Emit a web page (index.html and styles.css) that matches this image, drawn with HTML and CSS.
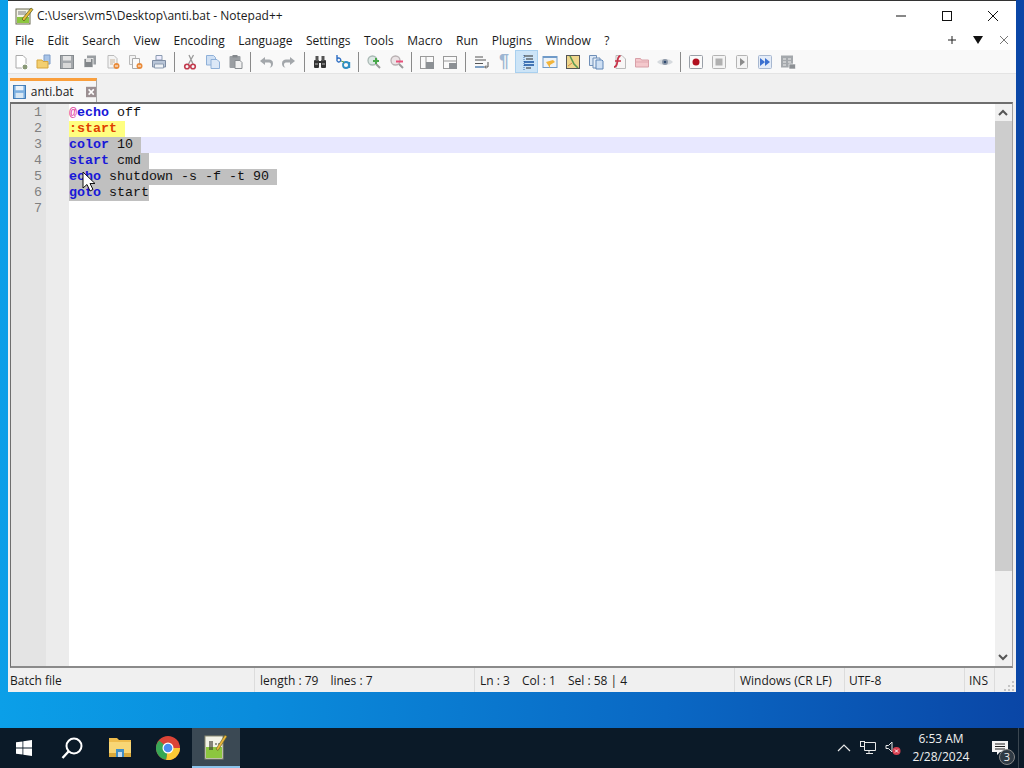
FILE: index.html
```html
<!DOCTYPE html>
<html lang="en">
<head>
    <meta charset="UTF-8">
    <title>anti.bat - Notepad++</title>
    <link rel="stylesheet" href="styles.css">
</head>
<body>
    <div class="desktop">
        <div class="window">
            <div class="titlebar">
                <svg class="app-icon" width="20" height="20" viewBox="0 0 20 20"><rect x="2" y="3" width="14" height="15" fill="#f4f4e8" stroke="#6a6a50"/><rect x="3" y="11" width="12" height="6" fill="#8cc63f"/><path d="M4 6h8M4 8h8" stroke="#7a7a7a"/><path d="M8 13L17 2l2 1.500L10 15z" fill="#e9b93c" stroke="#4d5a1e" stroke-width=".7"/></svg>
                <span class="title">C:\Users\vm5\Desktop\anti.bat - Notepad++</span>
                <div class="win-buttons">
                    <svg width="46" height="30" viewBox="0 0 46 30"><path d="M18 15h10" stroke="#111"/></svg>
                    <svg width="46" height="30" viewBox="0 0 46 30"><rect x="18.500" y="10.500" width="9" height="9" fill="none" stroke="#111"/></svg>
                    <svg width="46" height="30" viewBox="0 0 46 30"><path d="M18 10l10 10M28 10L18 20" stroke="#111"/></svg>
                </div>
            </div>

            <div class="menubar">
                <span>File</span><span>Edit</span><span>Search</span><span>View</span><span>Encoding</span><span>Language</span><span>Settings</span><span>Tools</span><span>Macro</span><span>Run</span><span>Plugins</span><span>Window</span><span>?</span>
                <div class="menu-right">
                    <svg width="10" height="10" viewBox="0 0 10 10"><path d="M5 1v8M1 5h8" stroke="#222"/></svg>
                    <svg width="10" height="8" viewBox="0 0 10 8"><path d="M0 0h10L5 8z" fill="#111"/></svg>
                    <svg width="10" height="10" viewBox="0 0 10 10"><path d="M1 1l8 8M9 1L1 9" stroke="#777"/></svg>
                </div>
            </div>

            <div class="toolbar">
                <div class="tool"><svg viewBox="0 0 16 16"><path d="M3 1.500h7l3 3V14H3z" fill="#fff" stroke="#aaa"/><circle cx="12" cy="13" r="3" fill="#8a9a78" stroke="#fff"/></svg></div>
                <div class="tool"><svg viewBox="0 0 16 16"><path d="M8 1h6v9H8z" fill="#a8c4e8" stroke="#7d9cc8"/><path d="M1 6h5l1 1.500h5V14H1z" fill="#f3cf70" stroke="#d5a53c"/></svg></div>
                <div class="tool"><svg viewBox="0 0 16 16"><rect x="1.500" y="1.500" width="13" height="13" fill="#a4a8ac" stroke="#858a8e"/><rect x="4" y="2" width="8" height="4.500" fill="#e4e4e4"/><rect x="4" y="9" width="8" height="5" fill="#d8d8d8"/></svg></div>
                <div class="tool"><svg viewBox="0 0 16 16"><rect x="5" y="1.500" width="9" height="9" fill="#9a9ea2"/><rect x="2" y="4.500" width="9" height="9" fill="#83878b" stroke="#fff" stroke-width=".7"/><rect x="4" y="5" width="5" height="3" fill="#ddd"/></svg></div>
                <div class="tool"><svg viewBox="0 0 16 16"><path d="M3 1.500h6l3 3V14H3z" fill="#f4f4f4" stroke="#bbb"/><path d="M5 6h5M5 8h5M5 10h3" stroke="#c9b59c"/><circle cx="11.500" cy="12" r="3" fill="#e98b3a"/><path d="M10 12h3" stroke="#fff"/></svg></div>
                <div class="tool"><svg viewBox="0 0 16 16"><path d="M1.500 1.500h6v9h-6z" fill="#f4f4f4" stroke="#bbb"/><path d="M4.500 4.500h7v10h-7z" fill="#fafafa" stroke="#aaa"/><circle cx="11.500" cy="12" r="3" fill="#e98b3a"/><path d="M10 12h3" stroke="#fff"/></svg></div>
                <div class="tool"><svg viewBox="0 0 16 16"><path d="M5 1.500h6V6H5z" fill="#eef" stroke="#8b9bb0"/><path d="M1.500 6.500h13V13h-13z" fill="#b9c6d8" stroke="#7e8da3"/><path d="M3.500 10h9v4h-9z" fill="#eef2f6" stroke="#8b9bb0"/></svg></div>
                <div class="tool-sep"></div>
                <div class="tool"><svg viewBox="0 0 16 16"><path d="M11.500 1L6.500 10M7 1l4 9" stroke="#9a9a9a" stroke-width="1.300"/><circle cx="5" cy="12.500" r="2.300" fill="none" stroke="#c23b4e" stroke-width="1.600"/><circle cx="11" cy="12.500" r="2.300" fill="none" stroke="#c23b4e" stroke-width="1.600"/></svg></div>
                <div class="tool"><svg viewBox="0 0 16 16"><path d="M1.500 1.500h7l2 2V11h-9z" fill="#cfe0f4" stroke="#8fb0d8"/><path d="M6 5.500h6l2.500 2.500v6.500H6z" fill="#dce8f7" stroke="#8fb0d8"/></svg></div>
                <div class="tool"><svg viewBox="0 0 16 16"><rect x="1.500" y="2" width="11" height="12" rx="1" fill="#9a9ea2"/><rect x="4.500" y="1" width="5" height="2.500" fill="#83878b"/><path d="M7 6.500h5l2 2v6H7z" fill="#f0f0f0" stroke="#8a8e92"/></svg></div>
                <div class="tool-sep"></div>
                <div class="tool"><svg viewBox="0 0 16 16"><path d="M7 3L2 7l5 4V8.500h4c1.500 0 2 1 2 2.500 0 1-.5 2-1.500 2.500 2.500 0 3.500-2 3.500-4 0-3-2-4-4-4H7z" fill="#a3a7ab"/></svg></div>
                <div class="tool"><svg viewBox="0 0 16 16"><path d="M9 3l5 4-5 4V8.500H5c-1.500 0-2 1-2 2.500 0 1 .5 2 1.500 2.500C2 13.500 1 11.500 1 9.500c0-3 2-4 4-4h4z" fill="#a3a7ab"/></svg></div>
                <div class="tool-sep"></div>
                <div class="tool"><svg viewBox="0 0 16 16"><rect x="2" y="6" width="5" height="8" rx="1" fill="#333"/><rect x="9" y="6" width="5" height="8" rx="1" fill="#333"/><rect x="3.500" y="2" width="3" height="5" fill="#555"/><rect x="9.500" y="2" width="3" height="5" fill="#555"/><path d="M7 8h2" stroke="#333" stroke-width="2"/><path d="M3 10h3M10 10h3" stroke="#bbb"/></svg></div>
                <div class="tool"><svg viewBox="0 0 16 16"><path d="M2 1v6M2 5a2 2 0 1 1 0 2" fill="none" stroke="#2f6fc4" stroke-width="1.400"/><circle cx="11" cy="11" r="3" fill="none" stroke="#2f8fc4" stroke-width="1.800"/><path d="M14.500 8v6" stroke="#2f8fc4" stroke-width="1.400"/><path d="M6 7l3 1-1 1" fill="none" stroke="#5a9a5a"/></svg></div>
                <div class="tool-sep"></div>
                <div class="tool"><svg viewBox="0 0 16 16"><circle cx="6.500" cy="6.500" r="4.500" fill="#dce8e4" stroke="#a9b8b4" stroke-width="1.300"/><path d="M10 10l4 4" stroke="#9a9a9a" stroke-width="2"/><path d="M7 7h6M10 4v6" stroke="#48a84a" stroke-width="2"/></svg></div>
                <div class="tool"><svg viewBox="0 0 16 16"><circle cx="6.500" cy="6.500" r="4.500" fill="#ebe4e6" stroke="#b8b0b2" stroke-width="1.300"/><path d="M10 10l4 4" stroke="#9a9a9a" stroke-width="2"/><path d="M7 7.500h7" stroke="#e8507a" stroke-width="2"/></svg></div>
                <div class="tool-sep"></div>
                <div class="tool"><svg viewBox="0 0 16 16"><rect x="1.500" y="2.500" width="13" height="12" fill="#fafafa" stroke="#9a9a9a"/><path d="M7 3v11" stroke="#9a9a9a"/><rect x="7" y="8" width="8" height="7" fill="#8c9094"/></svg></div>
                <div class="tool"><svg viewBox="0 0 16 16"><rect x="1.500" y="2.500" width="13" height="12" fill="#fafafa" stroke="#9a9a9a"/><path d="M2 7h12" stroke="#9a9a9a"/><rect x="7" y="9" width="8" height="6" fill="#8c9094"/></svg></div>
                <div class="tool-sep"></div>
                <div class="tool"><svg viewBox="0 0 16 16"><path d="M2 3h8M2 6h11M2 9.500h8" stroke="#555" stroke-width="1.200"/><path d="M2 13h9" stroke="#7fa0c4" stroke-width="2"/><path d="M15 8v5h-3M13 11.500L11.500 13l1.500 1.500" fill="none" stroke="#555"/></svg></div>
                <div class="tool glyph">¶</div>
                <div class="tool active"><svg viewBox="0 0 16 16"><path d="M5 1v15" stroke="#3a6fb0" stroke-dasharray="1 1"/><path d="M5 2h9M7 5h7" stroke="#2a2a2a" stroke-width="1.200"/><path d="M5 8h10M5 11h10" stroke="#1550a0" stroke-width="1.500"/><path d="M7 14h5" stroke="#2a2a2a"/></svg></div>
                <div class="tool"><svg viewBox="0 0 16 16"><rect x="1" y="2.500" width="14" height="11" fill="#eef3f8" stroke="#6f9ac8"/><rect x="1" y="2" width="14" height="2" fill="#6f9ac8"/><path d="M4 8l7-2 2 2-5 3v3l-2-3z" fill="#f2b53c"/></svg></div>
                <div class="tool"><svg viewBox="0 0 16 16"><rect x="1.500" y="1.500" width="13" height="13" fill="#efd68c" stroke="#555"/><path d="M5 2l4 8 4 4" fill="none" stroke="#5c9a50" stroke-width="1.600"/><path d="M3 12l4-3" stroke="#d88a4a"/></svg></div>
                <div class="tool"><svg viewBox="0 0 16 16"><path d="M1.500 1.500h7v10h-7z" fill="#dce8f6" stroke="#6f8fb8"/><path d="M5 4h7v10H5z" fill="#e6eef8" stroke="#6f8fb8"/><path d="M8 6h6l1 1v8H8z" fill="#cfe0f4" stroke="#5f86b8"/></svg></div>
                <div class="tool"><svg viewBox="0 0 16 16"><path d="M5 1.500h6l3.500 3.500v9.500H5z" fill="#f8f6f6" stroke="#bbb"/><path d="M9.500 2C7 2 7 4 6.500 7c-.5 3-.5 6-3.500 6" fill="none" stroke="#c8344a" stroke-width="1.800"/><path d="M4 7h6" stroke="#c8344a" stroke-width="1.500"/></svg></div>
                <div class="tool"><svg viewBox="0 0 16 16"><path d="M1.500 4.500h5l1 1.500h7v7h-13z" fill="#f4c8cc" stroke="#d8a0a8"/><path d="M2 8h12" stroke="#e0a8b0"/></svg></div>
                <div class="tool"><svg viewBox="0 0 16 16"><path d="M0 8c3-4 13-4 16 0-3 4-13 4-16 0z" fill="#d6dade"/><circle cx="8" cy="8" r="3" fill="#8c98a8"/><circle cx="8" cy="8" r="1.300" fill="#2f4a70"/></svg></div>
                <div class="tool-sep"></div>
                <div class="tool"><svg viewBox="0 0 16 16"><rect x="1.500" y="1.500" width="13" height="13" rx="1" fill="#fafafa" stroke="#9aa0a8"/><circle cx="8" cy="8" r="3.500" fill="#b01020"/></svg></div>
                <div class="tool"><svg viewBox="0 0 16 16"><rect x="1.500" y="1.500" width="13" height="13" rx="1" fill="#f4f4f4" stroke="#b4b4b4"/><rect x="4.500" y="4.500" width="7" height="7" fill="#b0b0b0"/></svg></div>
                <div class="tool"><svg viewBox="0 0 16 16"><rect x="2.500" y="1.500" width="11" height="13" rx="1" fill="#f4f4f4" stroke="#b4b4b4"/><path d="M6 4l5 4-5 4z" fill="#8c8c8c"/></svg></div>
                <div class="tool"><svg viewBox="0 0 16 16"><rect x="1.500" y="1.500" width="13" height="13" rx="1" fill="#e4ecf8" stroke="#a8b8d0"/><path d="M3 4l5 4-5 4zM8 4l5 4-5 4z" fill="#3a70d0"/></svg></div>
                <div class="tool"><svg viewBox="0 0 16 16"><rect x="1" y="1.500" width="12" height="12" fill="#a4a8ac"/><path d="M3 5h3M8 5h3M3 8h3M8 8h3M3 11h3" stroke="#eee"/><rect x="9" y="10" width="6.500" height="5" fill="#8c9094" stroke="#fff" stroke-width=".6"/></svg></div>
            </div>

            <div class="tabbar">
                <div class="tab">
                    <svg width="16" height="16" viewBox="0 0 16 16"><rect x=".5" y=".5" width="14" height="15" fill="#7db0e0" stroke="#2f6fb0"/><rect x="3" y="1" width="9" height="5" fill="#eaf2fa"/><rect x="3" y="9" width="9" height="6" fill="#d8e8f4"/></svg>
                    <span>anti.bat</span>
                    <svg class="tab-close" width="12" height="12" viewBox="0 0 12 12"><rect width="12" height="12" fill="#9b8f92"/><path d="M3 3l6 6M9 3L3 9" stroke="#fff" stroke-width="1.800"/></svg>
                </div>
            </div>

            <div class="editor">
                <div class="gutter">
                    <div>1</div><div>2</div><div>3</div><div>4</div><div>5</div><div>6</div><div>7</div>
                </div>
                <div class="code">
                    <div class="line"><span class="at">@</span><b>echo</b> off</div>
                    <div class="line"><span class="label">:start</span></div>
                    <div class="line current"><span class="sel"><b>color</b> 10</span></div>
                    <div class="line"><span class="sel"><b>start</b> cmd</span></div>
                    <div class="line"><span class="sel"><b>echo</b> shutdown -s -f -t 90</span></div>
                    <div class="line"><span class="sel last"><b>goto</b> start</span></div>
                    <div class="line"></div>
                </div>
                <div class="scrollbar">
                    <svg width="16" height="17" viewBox="0 0 16 17"><path d="M4 11l4-4 4 4" fill="none" stroke="#555" stroke-width="2"/></svg>
                    <div class="track"><div class="thumb"></div></div>
                    <svg width="16" height="17" viewBox="0 0 16 17"><path d="M4 6l4 4 4-4" fill="none" stroke="#555" stroke-width="2"/></svg>
                </div>
            </div>

            <div class="statusbar">
                <div class="st st-type">Batch file</div>
                <div class="st st-len"><span>length : 79</span><span>lines : 7</span></div>
                <div class="st st-pos"><span>Ln : 3</span><span>Col : 1</span><span>Sel : 58 | 4</span></div>
                <div class="st st-eol">Windows (CR LF)</div>
                <div class="st st-enc">UTF-8</div>
                <div class="st st-ins">INS</div>
                <svg class="grip" width="12" height="12" viewBox="0 0 12 12"><path d="M9 2h2v2H9zM5 6h2v2H5zM9 6h2v2H9zM1 10h2v2H1zM5 10h2v2H5zM9 10h2v2H9z" fill="#c4c4c4"/></svg>
            </div>
        </div>

        <svg class="pointer" width="14" height="22" viewBox="0 0 14 22"><path d="M1 1v16l4-3.500L8 20l3-1.500-3-6h5z" fill="#fff" stroke="#111"/></svg>
    </div>

    <div class="taskbar">
        <div class="task"><svg width="16" height="16" viewBox="0 0 16 16"><path d="M0 2.300l6.500-.9v6.200H0zM7.300 1.300L16 0v7.600H7.300zM0 8.400h6.500v6.200L0 13.700zM7.300 8.400H16V16l-8.700-1.300z" fill="#fff"/></svg></div>
        <div class="task"><svg width="24" height="24" viewBox="0 0 24 24"><circle cx="14" cy="10" r="7.500" fill="none" stroke="#fff" stroke-width="2"/><path d="M8.500 15.500L2.500 22" stroke="#fff" stroke-width="2.400"/></svg></div>
        <div class="task"><svg width="24" height="22" viewBox="0 0 24 22"><path d="M1 1h8l2 2h12v17H1z" fill="#eebc4c"/><rect x="1" y="5" width="22" height="15" fill="#f8d675"/><rect x="1" y="16" width="22" height="4" fill="#d9a93b"/><rect x="8" y="12" width="8" height="8" fill="#3f8fc8"/><rect x="10" y="15" width="4" height="5" fill="#c9dcea"/></svg></div>
        <div class="task"><svg width="24" height="24" viewBox="0 0 24 24"><circle cx="12" cy="12" r="12" fill="#db4437"/><path d="M12 12L1.600 18A12 12 0 0 1 3 4.500z" fill="#3aa757"/><path d="M12 12h12A12 12 0 0 1 10 23.900z" fill="#fcc934"/><path d="M1.600 18L6.800 9l5.200 3-1.900 11.800A12 12 0 0 1 1.600 18z" fill="#34a853"/><circle cx="12" cy="12" r="5.500" fill="#fff"/><circle cx="12" cy="12" r="4.300" fill="#4a8cf0"/></svg></div>
        <div class="task open"><svg width="24" height="26" viewBox="0 0 24 26"><rect x="1" y="2" width="18" height="23" fill="#f2f2e6" stroke="#8a8a70"/><rect x="2" y="13" width="16" height="11" fill="#8cc63f"/><path d="M6 7v9M8 7v9M11 10h2M14 10h2" stroke="#3a3a30" stroke-width="1.200"/><path d="M12 15L21 1l2 1.500-9 14z" fill="#eab53c" stroke="#5a5a20" stroke-width=".6"/></svg></div>
        <div class="tray">
            <svg width="14" height="8" viewBox="0 0 14 8"><path d="M1 7l6-6 6 6" fill="none" stroke="#e8e8e8" stroke-width="1.200"/></svg>
            <svg width="16" height="14" viewBox="0 0 16 14"><path d="M4.500 1.500h11v8h-11zM9 9.500v3M6 12.500h7" fill="none" stroke="#e8e8e8"/><rect x=".5" y=".5" width="4" height="5" fill="#0b1a28" stroke="#e8e8e8"/></svg>
            <svg width="16" height="16" viewBox="0 0 16 16"><path d="M1 5.500h2.500L7 2v10L3.500 8.500H1z" fill="none" stroke="#e8e8e8"/><circle cx="11.500" cy="11" r="4" fill="#d84050"/><path d="M10 9.500l3 3M13 9.500l-3 3" stroke="#fff"/></svg>
            <div class="clock"><div>6:53 AM</div><div>2/28/2024</div></div>
            <div class="notify">
                <svg width="16" height="15" viewBox="0 0 16 15"><path d="M0 0h16v11H8l-3 3v-3H0z" fill="#f4f4f4"/><path d="M3 3h10M3 5.500h10M3 8h10" stroke="#222"/></svg>
                <span class="badge">3</span>
            </div>
        </div>
    </div>
</body>
</html>
```

FILE: styles.css
```css
* {
    margin: 0;
    padding: 0;
    box-sizing: border-box;
}

html, body {
    width: 1024px;
    height: 768px;
    overflow: hidden;
}

body {
    font-family: "Open Sans", "Noto Sans", sans-serif;
    font-size: 12px;
    color: #1a1a1a;
    display: flex;
    flex-direction: column;
}

.desktop {
    position: relative;
    height: 728px;
    padding-left: 8px;
    background: linear-gradient(90deg, #0b9fe8 0%, #0a8cdc 25%, #0a68c4 65%, #0a46a6 100%);
}

.window {
    width: 1008px;
    height: 692px;
    background: #f0f0f0;
    border-top: 1px solid #333;
    display: flex;
    flex-direction: column;
}

/* title + menu */
.titlebar {
    height: 29px;
    background: #fff;
    display: flex;
    align-items: center;
    padding-left: 6px;
}

.app-icon {
    margin-right: 3px;
}

.win-buttons {
    margin-left: auto;
    display: flex;
    padding-right: 0;
}

.menubar {
    height: 20px;
    background: #fff;
    display: flex;
    align-items: center;
    gap: 13.500px;
    padding-left: 7px;
}

.menu-right {
    margin-left: auto;
    display: flex;
    align-items: center;
    gap: 16px;
    padding-right: 7px;
}

/* toolbar */
.toolbar {
    height: 24px;
    background: #f9f9f9;
    border-bottom: 1px solid #e4e4e4;
    display: flex;
    align-items: center;
    padding-left: 1.500px;
}

.tool {
    width: 23px;
    height: 23px;
    display: flex;
    align-items: center;
    justify-content: center;
    flex-shrink: 0;
}

.tool svg {
    width: 16px;
    height: 16px;
}

.tool.active {
    background: #cce4f7;
    border: 1px solid #a9d0ef;
}

.tool.glyph {
    font-family: "Liberation Sans", sans-serif;
    font-size: 18px;
    font-weight: bold;
    color: #9db6d2;
}

.tool-sep {
    width: 7.670px;
    height: 20px;
    flex-shrink: 0;
    background: linear-gradient(#8a8a8a, #8a8a8a) no-repeat center / 1px 100%;
}

/* tabs */
.tabbar {
    height: 28px;
    background: #f0f0f0;
    padding: 4px 0 0 2px;
}

.tab {
    width: 87px;
    height: 24px;
    border-top: 3px solid #fa9f3c;
    border-right: 1px solid #a8a8a8;
    background: #f6f6f6;
    display: flex;
    align-items: center;
    padding-left: 3px;
    gap: 4px;
}

.tab-close {
    margin-left: 8px;
}

/* editor */
.editor {
    height: 566px;
    margin: 0 3px 0 2px;
    border-top: 2px solid #6e6e6e;
    border-left: 1px solid #6e6e6e;
    border-right: 1px solid #a0a0a0;
    border-bottom: 2px solid #8a8a8a;
    background: #fff;
    display: flex;
}

.gutter {
    width: 58px;
    flex-shrink: 0;
    padding-top: 1px;
    background: linear-gradient(90deg, #e4e4e4 60%, #ececec 60%);
    font-family: "Liberation Mono", monospace;
    font-size: 13.330px;
    color: #808080;
    padding-right: 27px;
    text-align: right;
}

.gutter div {
    height: 16px;
    line-height: 16px;
}

.code {
    flex: 1;
    padding-top: 1px;
    font-family: "Liberation Mono", monospace;
    font-size: 13.330px;
    color: #111;
}

.line {
    height: 16px;
    line-height: 16px;
    white-space: pre;
}

.line b {
    color: #1818d8;
}

.line.current {
    background: #e8e8ff;
    box-shadow: inset 1px 0 0 #1a1a80;
}

.at {
    color: #e040a0;
}

.label {
    display: inline-block;
    padding-right: 8px;
    background: #ffff80;
    color: #e04000;
    font-weight: bold;
}

.sel {
    display: inline-block;
    padding-right: 8px;
    background: #c0c0c0;
}

.sel.last {
    padding-right: 0;
}

.scrollbar {
    width: 17px;
    flex-shrink: 0;
    background: #f0f0f0;
    display: flex;
    flex-direction: column;
}

.track {
    flex: 1;
}

.thumb {
    height: 450px;
    background: #cdcdcd;
}

/* status bar */
.statusbar {
    flex: 1;
    display: flex;
    align-items: center;
    background: #f0f0f0;
    position: relative;
}

.st {
    height: 100%;
    display: flex;
    align-items: center;
    gap: 12px;
    padding-left: 5px;
    border-right: 1px solid #dcdcdc;
}

.st-type { width: 247px; padding-left: 2px; }
.st-len { width: 220px; }
.st-pos { width: 260px; }
.st-eol { width: 110px; }
.st-enc { width: 120px; padding-left: 4px; }
.st-ins { width: 30px; padding-left: 4px; }

.grip {
    position: absolute;
    right: 1px;
    bottom: 1px;
}

.pointer {
    position: absolute;
    left: 82px;
    top: 171px;
}

/* taskbar */
.taskbar {
    height: 40px;
    background: #0b1a28;
    display: flex;
    align-items: center;
    color: #f0f0f0;
    padding-left: 0;
}

.task {
    width: 48px;
    height: 40px;
    display: flex;
    align-items: center;
    justify-content: center;
}

.task.open {
    background: #3b4954;
    border-bottom: 2px solid #8cc4ec;
}

.tray {
    margin-left: auto;
    display: flex;
    align-items: center;
    gap: 9px;
    padding-right: 5px;
}

.clock {
    width: 62px;
    text-align: center;
    line-height: 18px;
}

.notify {
    position: relative;
    width: 38px;
    height: 40px;
    display: flex;
    align-items: center;
    justify-content: center;
    border-right: 1px solid #3a4650;
}

.badge {
    position: absolute;
    left: 18px;
    top: 21px;
    width: 16px;
    height: 16px;
    border-radius: 50%;
    background: #2f3a44;
    border: 1px solid #888;
    font-size: 11px;
    line-height: 14px;
    text-align: center;
}
```
